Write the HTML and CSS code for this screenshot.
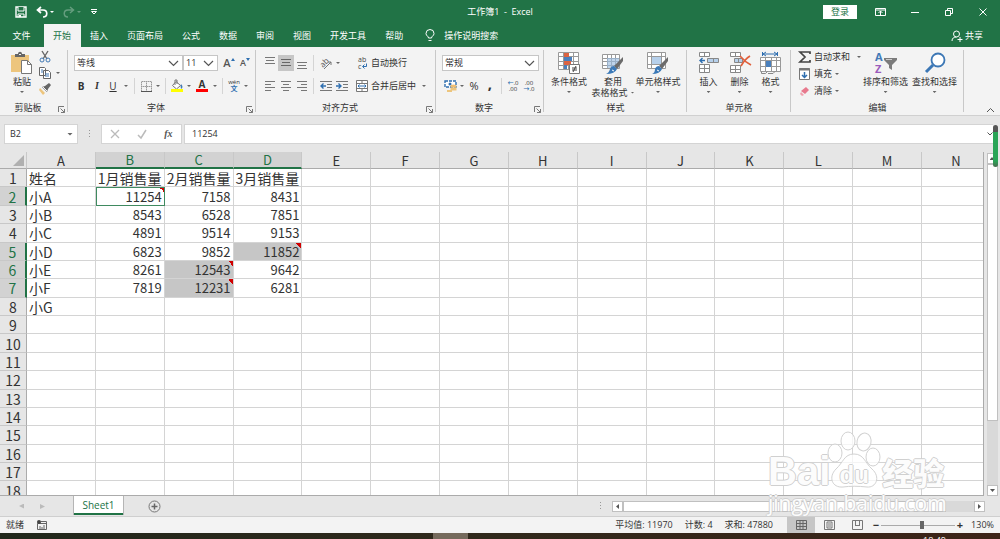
FILE: index.html
```html
<!DOCTYPE html>
<html lang="zh-CN">
<head>
<meta charset="utf-8">
<title>工作簿1 - Excel</title>
<link rel="stylesheet" href="styles.css">
</head>
<body>
<header class="titlebar">
  <div class="quick">
    <button aria-label="保存"><svg width="12" height="12" viewBox="0 0 12 12"><path d="M1 1h10v10H1z" fill="none" stroke="#fff" stroke-width="1.4"/><path d="M3 1v4h6V1" fill="#217346" stroke="#fff"/><path d="M3 11V8h6v3" fill="none" stroke="#fff"/><path d="M4 9h2v2H4z" fill="#fff"/></svg></button>
    <button aria-label="撤消" class="wide"><svg width="12" height="12" viewBox="0 0 12 12"><path d="M5 1L1.500 4l3.500 3M2 4h5c5 0 5 7 0 7" fill="none" stroke="#fff" stroke-width="1.7"/></svg><i class="caret light"></i></button>
    <button aria-label="恢复" class="wide dim"><svg width="12" height="12" viewBox="0 0 12 12"><path d="M7 1l3.500 3L7 7M10 4H5c-5 0-5 7 0 7" fill="none" stroke="#fff" stroke-width="1.5"/></svg><i class="caret light"></i></button>
    <button aria-label="自定义快速访问工具栏"><svg width="8" height="8" viewBox="0 0 8 8"><path d="M1 1.500h6M1.500 3.500h5L4 6z" fill="none" stroke="#fff"/></svg></button>
  </div>
  <h1>工作簿1 &nbsp;-&nbsp; Excel</h1>
  <div class="window">
    <button class="login">登录</button>
    <button aria-label="功能区显示选项"><svg width="11" height="10" viewBox="0 0 11 10"><path d="M.5 1.500h10v7H.5zM.5 3h10M5.500 8V4M3.500 6l2-2 2 2" fill="none" stroke="#fff"/></svg></button>
    <button aria-label="最小化"><svg width="10" height="10" viewBox="0 0 10 10"><path d="M1 5.500h8" stroke="#fff"/></svg></button>
    <button aria-label="还原"><svg width="10" height="10" viewBox="0 0 10 10"><path d="M1.500 3.500h5v5h-5zM3.500 3V1.500h5v5H7" fill="none" stroke="#fff"/></svg></button>
    <button aria-label="关闭"><svg width="10" height="10" viewBox="0 0 10 10"><path d="M1.500 1.500l7 7M8.500 1.500l-7 7" stroke="#fff"/></svg></button>
  </div>
</header>
<nav class="tabs">
  <button class="file">文件</button><button class="active">开始</button><button>插入</button><button>页面布局</button><button>公式</button><button>数据</button><button>审阅</button><button>视图</button><button>开发工具</button><button>帮助</button>
  <button class="tell"><svg width="10" height="13" viewBox="0 0 10 13"><path d="M3.500 9c0-2-2.500-2-2.500-4.500a4 4 0 018 0C9 7 6.500 7 6.500 9zM3.500 11.500h3" fill="none" stroke="#fff"/></svg>操作说明搜索</button>
  <button class="share"><svg width="12" height="12" viewBox="0 0 12 12"><circle cx="5.500" cy="4" r="3" fill="none" stroke="#fff"/><path d="M1 11c0-3 2-4 4.500-4M9 7v5M6.500 9.500h5" fill="none" stroke="#fff"/></svg>共享</button>
</nav>

<section class="ribbon">
  <div class="group clipboard">
    <div class="body">
      <button class="big"><svg width="22" height="22" viewBox="0 0 22 22"><path d="M0 3h18v17H0z" fill="#edc57d"/><path d="M4 5V2h3c0-3 4-3 4 0h3v3z" fill="#666"/><path d="M8 2.500h2" stroke="#f3f3f3"/><path d="M10.500 8.500h6l4 4v9h-10z" fill="#fff" stroke="#777"/><path d="M16.500 8.500v4h4" fill="none" stroke="#777"/></svg><span>粘贴</span><i class="caret"></i></button>
      <div class="stack">
        <button aria-label="剪切"><svg width="12" height="12" viewBox="0 0 12 12"><path d="M3 0l5 8M9 0L4 8" stroke="#666" stroke-width="1.4"/><circle cx="3" cy="9" r="2" fill="none" stroke="#4179b5"/><circle cx="9" cy="9" r="2" fill="none" stroke="#4179b5"/></svg></button>
        <button aria-label="复制"><svg width="12" height="12" viewBox="0 0 12 12"><path d="M.5.500h5l1 1v7h-6zM4.500 3.500h5l2 2v6h-7z" fill="#fff" stroke="#666"/><path d="M2 3h2M2 5h2M6 7h4M6 9h4" stroke="#4179b5"/></svg><i class="caret"></i></button>
        <button aria-label="格式刷"><svg width="12" height="12" viewBox="0 0 12 12"><path d="M1 5l5 5-2 2-4-5z" fill="#edc57d"/><path d="M3 4l5 5 1-3 3-4-2-2-4 3z" fill="#666"/><path d="M4 4l4 4" stroke="#f3f3f3"/></svg></button>
      </div>
    </div>
    <div class="caption">剪贴板<button class="launch" aria-label="剪贴板设置"><svg width="7" height="7" viewBox="0 0 7 7"><path d="M.5 6V.5H6M2.500 2.500l4 4M6.500 3v3.500H3" fill="none" stroke="#777"/></svg></button></div>
  </div>

  <div class="group font">
    <div class="body rows">
      <div class="row">
        <span class="combo family"><select aria-label="字体"><option>等线</option></select><svg width="11" height="7" viewBox="0 0 11 7"><path d="M1 1l4.500 4.500L10 1" fill="none" stroke="#555" stroke-width="1.2"/></svg></span>
        <span class="combo size"><select aria-label="字号"><option>11</option></select><svg width="11" height="7" viewBox="0 0 11 7"><path d="M1 1l4.500 4.500L10 1" fill="none" stroke="#555" stroke-width="1.2"/></svg></span>
        <button class="grow" aria-label="增大字号"><b>A</b><svg width="4" height="3" viewBox="0 0 4 3"><path d="M0 3l2-3 2 3z" fill="#2f6fb0"/></svg></button>
        <button class="grow small" aria-label="减小字号"><b>A</b><svg width="4" height="3" viewBox="0 0 4 3"><path d="M0 0l2 3 2-3z" fill="#2f6fb0"/></svg></button>
      </div>
      <div class="row">
        <button class="ic"><b>B</b></button><button class="ic serif"><em>I</em></button><button class="ic"><u>U</u></button><button class="drop wider" aria-label="下划线选项"><i class="caret"></i></button>
        <i class="sep"></i>
        <button class="ic" aria-label="边框"><svg width="11" height="11" viewBox="0 0 11 11"><path d="M.5.500h10v10H.5zM5.500 0v10M0 5.500h10" fill="none" stroke="#999" stroke-dasharray="1.5 .5"/><path d="M0 10.500h11" stroke="#555"/></svg></button><button class="drop" aria-label="边框选项"><i class="caret"></i></button>
        <i class="sep"></i>
        <button class="ic" aria-label="填充颜色"><svg width="12" height="12" viewBox="0 0 12 12"><path d="M5 1.500l4.500 4L5.500 9 1.500 5.500zM4 5V0h2v4" fill="#fff" stroke="#777"/><path d="M10 4q3 3 0 5-1-3 0-5" fill="#4179b5"/><path d="M0 9h12v3H0z" fill="#ffff00"/></svg></button><button class="drop" aria-label="填充颜色选项"><i class="caret"></i></button>
        <button class="ic fontcolor" aria-label="字体颜色"><b>A</b></button><button class="drop" aria-label="字体颜色选项"><i class="caret"></i></button>
        <i class="sep"></i>
        <button class="ic pinyin"><span>wén</span><span>文</span></button><button class="drop" aria-label="拼音选项"><i class="caret"></i></button>
      </div>
    </div>
    <div class="caption">字体<button class="launch" aria-label="字体设置"><svg width="7" height="7" viewBox="0 0 7 7"><path d="M.5 6V.5H6M2.500 2.500l4 4M6.500 3v3.500H3" fill="none" stroke="#777"/></svg></button></div>
  </div>

  <div class="group align">
    <div class="body">
      <div class="rows">
        <div class="row">
          <button class="ic" aria-label="顶端对齐"><svg width="12" height="12" viewBox="0 0 12 12"><path d="M1 .5h10M2 3.500h8M1 6.500h10" stroke="#777"/></svg></button>
          <button class="ic on" aria-label="垂直居中"><svg width="12" height="12" viewBox="0 0 12 12"><path d="M1 2.500h10M2 5.500h8M1 8.500h10" stroke="#666"/></svg></button>
          <button class="ic" aria-label="底端对齐"><svg width="12" height="12" viewBox="0 0 12 12"><path d="M1 5.500h10M2 8.500h8M1 11.500h10" stroke="#777"/></svg></button>
          <i class="sep"></i>
          <button class="ic" aria-label="方向"><svg width="12" height="12" viewBox="0 0 12 12"><text x="0" y="8" transform="rotate(-45 5 6)" font-size="8" fill="#555">ab</text><path d="M4 12l7-7M11 8V5H8" fill="none" stroke="#777"/></svg></button><button class="drop" aria-label="方向选项"><i class="caret"></i></button>
        </div>
        <div class="row">
          <button class="ic" aria-label="左对齐"><svg width="12" height="12" viewBox="0 0 12 12"><path d="M1 1.500h10M1 4.500h6M1 7.500h10M1 10.500h6" stroke="#777"/></svg></button>
          <button class="ic" aria-label="居中"><svg width="12" height="12" viewBox="0 0 12 12"><path d="M1 1.500h10M3 4.500h6M1 7.500h10M3 10.500h6" stroke="#777"/></svg></button>
          <button class="ic" aria-label="右对齐"><svg width="12" height="12" viewBox="0 0 12 12"><path d="M1 1.500h10M5 4.500h6M1 7.500h10M5 10.500h6" stroke="#777"/></svg></button>
          <i class="sep"></i>
          <button class="ic" aria-label="减少缩进量"><svg width="12" height="12" viewBox="0 0 12 12"><path d="M0 1.500h12M7 4.500h5M7 7.500h5M0 10.500h12" stroke="#777"/><path d="M6 6H1M3.500 3.500L1 6l2.500 2.500" fill="none" stroke="#2f6fb0" stroke-width="1.4"/></svg></button>
          <button class="ic" aria-label="增加缩进量"><svg width="12" height="12" viewBox="0 0 12 12"><path d="M0 1.500h12M7 4.500h5M7 7.500h5M0 10.500h12" stroke="#777"/><path d="M0 6h5M2.500 3.500L5 6 2.500 8.500" fill="none" stroke="#2f6fb0" stroke-width="1.4"/></svg></button>
        </div>
      </div>
      <i class="longsep"></i>
      <div class="rows">
        <div class="row"><button class="text"><svg width="12" height="12" viewBox="0 0 12 12"><text x="2" y="5" font-size="7" fill="#444">ab</text><text x="2" y="12" font-size="7" fill="#444">c</text><path d="M10.500 6.500v3H7M8.500 7.500l-2 2 2 2" fill="none" stroke="#2f6fb0"/></svg>自动换行</button></div>
        <div class="row"><button class="text"><svg width="12" height="12" viewBox="0 0 12 12"><path d="M.5.500h11v11H.5zM.5 3.500h11M.5 8.500h11M6 0v3M6 9v3" fill="#fff" stroke="#777"/><path d="M2 6h8M3.500 4.500L2 6l1.500 1.500M8.500 4.500L10 6 8.500 7.500" fill="none" stroke="#2f6fb0"/></svg>合并后居中</button><button class="drop merge" aria-label="合并选项"><i class="caret"></i></button></div>
      </div>
    </div>
    <div class="caption">对齐方式<button class="launch" aria-label="对齐设置"><svg width="7" height="7" viewBox="0 0 7 7"><path d="M.5 6V.5H6M2.500 2.500l4 4M6.500 3v3.500H3" fill="none" stroke="#777"/></svg></button></div>
  </div>

  <div class="group number">
    <div class="body rows">
      <div class="row"><span class="combo format"><select aria-label="数字格式"><option>常规</option></select><svg width="11" height="7" viewBox="0 0 11 7"><path d="M1 1l4.500 4.500L10 1" fill="none" stroke="#555" stroke-width="1.2"/></svg></span></div>
      <div class="row">
        <button class="ic" aria-label="会计数字格式"><svg width="13" height="12" viewBox="0 0 13 12"><path d="M1 1h11v6H1z" fill="#fff" stroke="#2f6fb0" stroke-width="1.4" stroke-dasharray="3 1"/><circle cx="6" cy="4" r="1.500" fill="#2f6fb0"/><ellipse cx="9.500" cy="6" rx="3" ry="1.500" fill="#edbd72"/><path d="M6.500 7.500h6v3h-6zM3 10h5v2H3z" fill="#edc57d"/></svg></button><button class="drop" aria-label="会计格式选项"><i class="caret"></i></button>
        <button class="ic percent">%</button><button class="ic comma"><b>,</b></button><i class="sep"></i>
        <button class="ic decimals" aria-label="增加小数位数"><span><s>←</s>.0</span><span>.00</span></button>
        <button class="ic decimals" aria-label="减少小数位数"><span>.00</span><span><s>→</s>.0</span></button>
      </div>
    </div>
    <div class="caption">数字<button class="launch" aria-label="数字设置"><svg width="7" height="7" viewBox="0 0 7 7"><path d="M.5 6V.5H6M2.500 2.500l4 4M6.500 3v3.500H3" fill="none" stroke="#777"/></svg></button></div>
  </div>

  <div class="group styles">
    <div class="body">
      <button class="big"><svg width="22" height="22" viewBox="0 0 22 22"><path d="M.5.500h20v17H.5zM5.500 0v18M10.500 0v18M15.500 0v18M0 4.500h20M0 9.500h20M0 13.500h20" fill="#fff" stroke="#999"/><path d="M6 1h5v4H6zM6 9h7v4H6z" fill="#db6443"/><path d="M6 5h8v4H6zM6 13h3v4H6z" fill="#4a80bd"/><path d="M11.500 12.500h10v9h-10z" fill="#fff" stroke="#777"/><path d="M14 16h5M14 18h5M18 14l-3 6" stroke="#444"/></svg><span>条件格式</span><i class="caret"></i></button>
      <button class="big"><svg width="22" height="22" viewBox="0 0 22 22"><path d="M.5 2.500h17v14H.5zM5.500 2v14M9.500 2v14M13.500 2v14M0 6.500h17M0 9.500h17M0 13.500h17" fill="#fff" stroke="#999"/><path d="M5 6h12v10H5z" fill="#9bbde0" opacity=".65"/><path d="M21 5v4l-6 8-3-3z" fill="#6b6b6b"/><path d="M12 14l3 3q-2 5-11 5 3-1 4-5 1-3 4-3" fill="#3c7ab8"/><path d="M10 18l2 1" stroke="#fff"/></svg><span>套用</span><span class="second">表格格式<i class="caret"></i></span></button>
      <button class="big"><svg width="22" height="22" viewBox="0 0 22 22"><path d="M.5.500h18v16H.5zM4.500 0v16M14.500 0v16M0 4.500h18M0 12.500h18" fill="#fff" stroke="#999"/><path d="M5 5h9v7H5z" fill="#b6d0eb"/><path d="M21 5v4l-6 8-3-3z" fill="#6b6b6b"/><path d="M12 14l3 3q-2 5-10 5 3-1 3-5 1-3 4-3" fill="#3c7ab8"/><path d="M10 18l2 1" stroke="#fff"/></svg><span>单元格样式</span><i class="caret"></i></button>
    </div>
    <div class="caption">样式</div>
  </div>

  <div class="group cells">
    <div class="body">
      <button class="big"><svg width="22" height="22" viewBox="0 0 22 22"><path d="M1.500.500h10v4h-10zM6.500 0v4M1.500 12.500h10v8h-10zM6.500 12v8M1 16.500h10" fill="#fff" stroke="#888"/><path d="M9.500 6.500h11v4h-11zM15.500 6v4" fill="#b6d0eb" stroke="#888"/><path d="M7 8.500H2M4.500 6L2 8.500 4.500 11" fill="none" stroke="#2f6fb0" stroke-width="1.4"/></svg><span>插入</span><i class="caret"></i></button>
      <button class="big"><svg width="22" height="22" viewBox="0 0 22 22"><path d="M1.500.500h10v4h-10zM6.500 0v4M1.500 13.500h10v7h-10zM6.500 13v7M1 17.500h10" fill="#fff" stroke="#888"/><path d="M5.500 6.500h8v4h-8zM9.500 6v4" fill="#b6d0eb" stroke="#888"/><path d="M11 4q5 6 11 9M21 4q-5 3-9 10" fill="none" stroke="#e0603c" stroke-width="1.7"/></svg><span>删除</span><i class="caret"></i></button>
      <button class="big"><svg width="22" height="22" viewBox="0 0 22 22"><path d="M2.500 0v4M17.500 0v4M3 2h14M6 0L3 2l3 2M14 0l3 2-3 2" fill="none" stroke="#2f6fb0"/><path d="M.5 5.500h20v14h-20zM5.500 5v14M11.500 5v14M16.500 5v14M0 8.500h20M0 14.500h20" fill="#fff" stroke="#999"/><path d="M6 9h5v6H6z" fill="#4a80bd"/><path d="M1.500 19.500v2h4l2-2M8 21.500h5l2-2" fill="none" stroke="#888"/></svg><span>格式</span><i class="caret"></i></button>
    </div>
    <div class="caption">单元格</div>
  </div>

  <div class="group editing">
    <div class="body">
      <div class="stack">
        <button class="text"><svg width="12" height="12" viewBox="0 0 12 12"><path d="M11 3V1H1l5 5-5 5h10V9" fill="none" stroke="#444" stroke-width="1.7"/></svg>自动求和<i class="caret far"></i></button>
        <button class="text"><svg width="12" height="12" viewBox="0 0 12 12"><path d="M.5.500h10v11H.5z" fill="#fff" stroke="#777"/><path d="M0 1.500h11" stroke="#777" stroke-width="2"/><path d="M5.500 4v5M3 7l2.500 2.500L8 7" fill="none" stroke="#2f6fb0" stroke-width="1.5"/></svg>填充<i class="caret"></i></button>
        <button class="text"><svg width="12" height="12" viewBox="0 0 12 12"><path d="M7 2l3 3-4 4-4-3z" fill="#e8798d"/><path d="M2 7l3 3-2 1-2-2z" fill="#f0a3b0"/></svg>清除<i class="caret"></i></button>
      </div>
      <button class="big"><svg width="22" height="22" viewBox="0 0 22 22"><text x="0" y="9" font-size="11" font-weight="700" fill="#4279b7">A</text><text x="0" y="21" font-size="11" font-weight="700" fill="#9a5bbb">Z</text><path d="M9 6h13v2l-5 5v5l-3-2v-3L9 8z" fill="#7b7b7b"/><path d="M11 7.500h6" stroke="#ccc"/></svg><span>排序和筛选</span><i class="caret"></i></button>
      <button class="big"><svg width="22" height="22" viewBox="0 0 22 22"><circle cx="14" cy="8" r="6.500" fill="#fff" stroke="#3c77b5" stroke-width="1.8"/><path d="M9 13l-7 7" stroke="#3c77b5" stroke-width="3"/></svg><span>查找和选择</span><i class="caret"></i></button>
    </div>
    <div class="caption">编辑</div>
  </div>
  <button class="collapse" aria-label="折叠功能区"><svg width="9" height="6" viewBox="0 0 9 6"><path d="M1 5l3.500-3.500L8 5" fill="none" stroke="#555"/></svg></button>
</section>

<section class="formula">
  <button class="name">B2<i class="caret"></i></button>
  <i class="dots"></i>
  <div class="fx">
    <button aria-label="取消"><svg width="10" height="10" viewBox="0 0 10 10"><path d="M1 1l8 8M9 1L1 9" stroke="#bbb" stroke-width="1.3"/></svg></button>
    <button aria-label="输入"><svg width="10" height="10" viewBox="0 0 10 10"><path d="M1 6l3 3 5-8" fill="none" stroke="#bbb" stroke-width="1.5"/></svg></button>
    <button class="fn"><em>fx</em></button>
  </div>
  <div class="entry"><input aria-label="编辑栏" value="11254"><button aria-label="展开编辑栏"><svg width="6" height="4" viewBox="0 0 6 4"><path d="M.5.500L3 3 5.500.500" fill="none" stroke="#555"/></svg></button></div>
  <span class="indicator"></span>
</section>

<main>
  <div class="sheet"><table><thead></thead><tbody></tbody></table></div>
  <div class="vscroll"><button class="arrow up" aria-label="向上"></button><div class="thumb"></div><button class="arrow down" aria-label="向下"></button></div>
</main>

<footer>
  <div class="sheetbar">
    <button class="nav prev" aria-label="上一张"></button><button class="nav next" aria-label="下一张"></button>
    <button class="sheettab">Sheet1</button>
    <button class="add" aria-label="新工作表"><svg width="13" height="13" viewBox="0 0 13 13"><circle cx="6.500" cy="6.500" r="5.500" fill="none" stroke="#777"/><path d="M3.500 6.500h6M6.500 3.500v6" stroke="#666" stroke-width="1.5"/></svg></button>
    <i class="dots"></i>
    <div class="hscroll"><button class="arrow left" aria-label="向左"></button><div class="thumb"></div><button class="arrow right" aria-label="向右"></button></div>
  </div>
  <div class="status">
    <span>就绪</span>
    <svg width="10" height="10" viewBox="0 0 10 10"><path d="M.5 3.500h9v6h-9zM4 1.500h5.500V4M3 9V6M5 9V7M7 9V5" fill="none" stroke="#666"/><circle cx="2" cy="2" r="2" fill="#444"/></svg>
    <span class="stats"><span>平均值: 11970</span><span>计数: 4</span><span>求和: 47880</span></span>
    <button class="view on" aria-label="普通"><svg width="11" height="10" viewBox="0 0 11 10"><path d="M.5.500h10v9H.5zM4 0v10M7 0v10M0 3.500h11M0 6.500h11" fill="none" stroke="#666"/></svg></button>
    <button class="view" aria-label="页面布局"><svg width="11" height="10" viewBox="0 0 11 10"><path d="M.5.500h10v9H.5zM3 2h5v6H3zM4 4h3M4 6h3" fill="none" stroke="#777"/></svg></button>
    <button class="view" aria-label="分页预览"><svg width="11" height="10" viewBox="0 0 11 10"><path d="M.5.500h10v9H.5zM3.500 0v6M7.500 0v6M3 5.500h5" fill="none" stroke="#777"/></svg></button>
    <button class="zoom" aria-label="缩小">−</button><input type="range" aria-label="缩放" min="10" max="210" value="120"><button class="zoom" aria-label="放大">+</button>
    <span class="pct">130%</span>
  </div>
  <div class="taskbar"><i></i><time>18:49</time></div>
</footer>

<div class="watermark">
  <div class="brand"><span class="bai">Bai</span><span class="paw"><svg width="56" height="58" viewBox="0 0 56 58"><g fill="#fff" fill-opacity=".75" stroke="#d2d2d2"><ellipse cx="9" cy="22" rx="7" ry="9"/><ellipse cx="22" cy="10" rx="7" ry="9"/><ellipse cx="38" cy="11" rx="7" ry="9" transform="rotate(12 38 11)"/><ellipse cx="47" cy="26" rx="7" ry="9"/><path d="M28 23c10 0 11 9 18 15 9 8 4 19-5 18-9-1-17-1-24 0-11 1-15-10-7-18 7-6 8-15 18-15z"/></g></svg><span>du</span></span><span class="jy">经验</span></div>
  <div class="url">jingyan.baidu.com</div>
</div>
<script src="sheet.js"></script>
</body>
</html>
```

FILE: styles.css
```css
* { box-sizing: border-box; }
body {
  margin: 0; height: 100vh; display: flex; flex-direction: column; overflow: hidden;
  background: #e6e6e6; color: #333;
  font: 9px/12px "Open Sans", "Noto Sans CJK SC", sans-serif;
}
button, select, input { font: inherit; color: inherit; border: 0; padding: 0; margin: 0; background: none; border-radius: 0; }
button { display: flex; align-items: center; justify-content: center; flex: none; white-space: nowrap; }
svg { flex: none; display: block; overflow: visible; }
i { font-style: normal; }

.caret { flex: none; width: 4px; height: 2px; background: #666; clip-path: polygon(0 0, 100% 0, 50% 100%); }
.caret.light { background: #fff; }

.titlebar { height: 24px; flex: none; display: grid; grid-template-columns: 1fr auto 1fr; align-items: center; background: #217346; color: #fff; }
.titlebar h1 { margin: 0; font: inherit; }
.quick { display: flex; gap: 9px; padding-left: 15px; }
.quick .wide { gap: 2px; }
.quick .dim { opacity: .3; }
.window { display: flex; justify-content: flex-end; align-items: center; padding-right: 12px; gap: 24px; }
.window .login { width: 34px; height: 14px; margin-right: -6px; background: #fff; color: #217346; }

.tabs { height: 23px; flex: none; display: flex; background: #217346; color: #fff; }
.tabs button { padding: 0 10px 0 9px; }
.tabs .file { width: 44px; }
.tabs .active { background: #f3f3f3; color: #217346; }
.tabs .tell { gap: 9px; margin-left: 3px; }
.tabs .share { gap: 2px; margin-left: auto; padding-right: 17px; }

.ribbon { height: 69px; flex: none; display: flex; background: #f3f3f3; border-bottom: 1px solid #d0d0d0; }
.group { flex: none; display: flex; flex-direction: column; position: relative; }
.group::after { content: ""; position: absolute; right: 0; top: 3px; bottom: 3px; width: 1px; background: #c8c8c8; }
.clipboard { width: 68px; }
.font { width: 188px; }
.align { width: 180px; }
.number { width: 108px; }
.styles { width: 143px; }
.cells { width: 104px; }
.editing { width: 173px; }
.body { flex: 1; display: flex; padding: 4px 5px 0; }
.caption { height: 15px; display: flex; justify-content: center; align-items: center; line-height: 14px; position: relative; }
.caption:has(.launch) { padding-right: 12px; }
.launch { position: absolute; right: 3px; bottom: 2px; }
.rows { flex-direction: column; display: flex; gap: 7px; }
.group > .rows { padding-top: 8px; }
.align .body > .rows { padding-top: 4px; }
.row { display: flex; align-items: center; height: 16px; }
.ic { width: 16px; height: 16px; font-size: 10px; }
.ic.on { background: #c6c6c6; }
.drop { width: 8px; height: 16px; }
.drop.wider { width: 10px; }
.drop.merge { width: 16px; }
.sep { flex: none; width: 1px; height: 16px; margin: 0 3px; background: #d4d4d4; }
.align .sep { margin: 0 4px 0 3px; }
.longsep { width: 1px; height: 43px; margin: 2px 5px 0 1px; background: #d4d4d4; }
.text { gap: 3px; }
.big { flex-direction: column; justify-content: flex-start; padding-top: 1px; }
.big span { height: 11px; line-height: 11px; }
.big svg { margin-bottom: 2px; }
.big > .caret { margin-top: 4px; }
.big .second { display: flex; align-items: center; gap: 3px; }
.stack { display: flex; flex-direction: column; }

.clipboard .body { padding-left: 11px; gap: 6px; }
.clipboard .stack { gap: 4px; align-items: flex-start; }
.clipboard .stack button { gap: 5px; }
.number .body, .align .body { padding-left: 6px; }
.styles .body { padding-left: 3px; }
.styles .big { width: 44px; }
.styles .big:last-child { width: 46px; }
.cells .body { padding-left: 6px; }
.cells .big { width: 31px; }
.editing .body { padding-left: 8px; }
.editing .stack { width: 62px; gap: 5px; align-items: flex-start; }
.editing .big { width: 49px; }
.text .far { margin-left: 4px; }

.combo { position: relative; height: 16px; flex: none; background: #fff; border: 1px solid #c6c6c6; }
.combo select { width: 100%; height: 14px; padding-left: 2px; appearance: none; display: block; }
.combo svg { position: absolute; right: 3px; top: 4px; pointer-events: none; }
.font .row:first-child { padding-left: 1px; }
.family { width: 109px; }
.size { width: 35px; margin-right: 3px; }
.number .format { width: 97px; }
.grow { width: 16px; height: 16px; font-size: 11px; }
.grow b { font-weight: 600; color: #555; }
.grow svg { margin-bottom: 8px; }
.grow.small { font-size: 9px; }
.serif { font-family: "Liberation Serif", serif; font-weight: 700; }
.fontcolor { width: 18px; }
.fontcolor b { width: 12px; height: 12px; line-height: 9px; border-bottom: 3px solid #f00; }
.pinyin, .decimals { flex-direction: column; }
.pinyin span { font-size: 6px; line-height: 5px; }
.pinyin span + span { color: #2f6fb0; font-size: 7px; line-height: 8px; font-weight: 700; }
.percent { font-size: 11px; }
.comma { font-size: 15px; padding-bottom: 7px; }
.decimals span { font-size: 6px; line-height: 6px; }
.decimals s { text-decoration: none; color: #2f6fb0; font-weight: 700; }
.collapse { margin: auto 5px 1px auto; height: 9px; }

.formula { height: 36px; flex: none; display: flex; align-items: center; padding: 0 7px 0 4px; position: relative; }
.formula .name { width: 74px; height: 20px; justify-content: space-between; padding: 0 4px 0 5px; background: #fff; border: 1px solid #d4d4d4; }
.name .caret { width: 6px; height: 3px; }
.dots { width: 1px; height: 9px; margin: 0 11px; background: repeating-linear-gradient(#999 0 1px, transparent 1px 3px); }
.fx { display: flex; align-items: center; justify-content: space-around; width: 81px; height: 20px; margin-right: 2px; background: #fff; border: 1px solid #d4d4d4; }
.fn { font: 700 10px/12px "Liberation Serif", serif; color: #555; }
.entry { flex: 1; display: flex; height: 20px; background: #fff; border: 1px solid #d4d4d4; border-right: 0; }
.entry input { flex: 1; min-width: 0; padding: 0 7px; }
.indicator { position: absolute; right: 2px; top: 9px; width: 5px; height: 42px; border-radius: 3px; background: linear-gradient(#555 0 7px, #2aa557 7px 36px, #4a6b50); z-index: 2; }

main { flex: 1; min-height: 0; display: grid; grid-template-columns: minmax(0, 1fr) 16px; }
.sheet { overflow: hidden; border-right: 1px solid #ababab; border-bottom: 1px solid #ababab; background: #fff; min-height: 0; }
table { table-layout: fixed; width: calc(100% + 8px); height: calc(100% + 5px); border-collapse: separate; border-spacing: 0; font-family: "Noto Sans CJK SC", sans-serif; font-size: 14px; color: #333; }
th, td { padding: 1px 0 0; overflow: hidden; white-space: nowrap; line-height: 16px; border: solid #d4d4d4; border-width: 0 1px 1px 0; }
th { font-weight: 400; font-size: 14px; background: #e6e6e6; }
thead th { height: 17px; line-height: 14px; font-size: 13px; border-bottom-color: #ababab; border-right-color: #c8c8c8; }
thead th.hl { background: #d2d2d2; color: #217346; border-bottom: 2px solid #217346; }
tbody th { border-right-color: #ababab; border-bottom-color: #c8c8c8; }
tbody th.hl { background: #d2d2d2; color: #217346; border-right: 2px solid #217346; }
.corner { width: 27px; }
.corner i { display: block; width: 11px; height: 11px; margin-left: 13px; background: #b0b0b0; clip-path: polygon(100% 0, 100% 100%, 0 100%); }
td { padding-left: 2px; }
td.num { text-align: right; padding-right: 2px; font-size: 13px; }
td.note { background: #fff linear-gradient(to top right, transparent 50%, #d00000 50%) right top / 5px 5px no-repeat; }
td.note.sel { background-color: #c6c6c6; }
td.current { outline: 1px solid #3f8a60; outline-offset: -1px; }

.arrow { width: 11px; height: 11px; background: #fff; border: 1px solid #c0c0c0; }
.arrow::before { content: ""; width: 5px; height: 3px; background: #555; clip-path: polygon(50% 0, 100% 100%, 0 100%); }
.down::before { transform: rotate(180deg); }
.left::before { transform: rotate(-90deg); }
.right::before { transform: rotate(90deg); }
.vscroll { display: flex; flex-direction: column; align-items: center; padding: 1px 2px 0; }
.vscroll .thumb { width: 11px; flex: 4; background: #fff; border: 1px solid #c0c0c0; }
.vscroll::after { content: ""; flex: 1; order: 1; background: #d9d9d9; width: 11px; }
.vscroll .down { order: 2; }

.sheetbar { height: 21px; display: flex; align-items: center; border-bottom: 1px solid #cfcfcf; padding-right: 15px; }
.nav { width: 5px; height: 5px; background: #bbb; clip-path: polygon(0 50%, 100% 0, 100% 100%); margin-left: 19px; }
.nav.next { transform: rotate(180deg); margin-left: 16px; }
.sheettab { width: 51px; height: 19px; margin: 0 24px 2px 28px; font-size: 10px; background: #fff; color: #217346; border: solid #b5b5b5; border-width: 0 1px; box-shadow: inset 0 -2px #217346; }
.sheetbar .dots { margin-left: auto; }
.hscroll { width: 373px; display: flex; }
.hscroll .thumb { flex: 10; background: #fff; border: 1px solid #c0c0c0; }
.hscroll::after { content: ""; order: 1; flex: 1; max-width: 28px; background: #d9d9d9; }
.hscroll .right { order: 2; }
.status { height: 16px; display: flex; align-items: center; padding: 0 6px; background: #f3f3f3; }
.status > svg { margin-left: 13px; }
.stats { margin: 0 14px 0 auto; display: flex; gap: 12px; }
.view { width: 28px; height: 16px; }
.view.on { background: #c6c6c6; }
.zoom { width: 10px; font-size: 11px; font-weight: 700; }
.status input { width: 74px; height: 16px; appearance: none; background: linear-gradient(#aaa, #aaa) center / 100% 1px no-repeat; }
.status input::-webkit-slider-thumb { appearance: none; width: 4px; height: 8px; background: #666; }
.pct { width: 29px; text-align: right; }
.taskbar { height: 6px; display: flex; position: relative; overflow: hidden; background: linear-gradient(90deg, #20271b, #30281b 50%, #3d2418); }
.taskbar i { width: 35px; margin-left: 433px; background: #756a5c; }
.taskbar time { margin: 2px 54px 0 auto; color: #fff; font-size: 9px; line-height: 12px; }

.watermark { position: absolute; right: 55px; bottom: 22px; width: 177px; pointer-events: none; }
.watermark span, .url { text-shadow: 1px 0 #d0d0d0, -1px 0 #d0d0d0, 0 1px #d0d0d0, 0 -1px #d0d0d0; color: #fcfcfc; }
.brand { display: flex; align-items: flex-end; height: 58px; font-family: "Liberation Sans", sans-serif; font-weight: 700; }
.bai { font-size: 40px; line-height: 36px; }
.paw { display: grid; flex: none; margin-left: -4px; }
.paw > * { grid-area: 1 / 1; }
.paw > span { align-self: end; justify-self: center; font-size: 24px; line-height: 28px; }
.jy { font: 900 31px/34px "Noto Sans CJK SC", sans-serif; white-space: nowrap; }
.url { font: 21px/28px "Open Sans", sans-serif; }
```

FILE: sheet.js
```js
const columns = 'ABCDEFGHIJKLMN'.split('');
const data = [
  ['姓名', '1月销售量', '2月销售量', '3月销售量'],
  ['小A', 11254, 7158, 8431],
  ['小B', 8543, 6528, 7851],
  ['小C', 4891, 9514, 9153],
  ['小D', 6823, 9852, 11852],
  ['小E', 8261, 12543, 9642],
  ['小F', 7819, 12231, 6281],
  ['小G']
];
const selected = ['B2', 'D5', 'C6', 'C7'];

const head = document.querySelector('thead').insertRow();
head.innerHTML = '<th class="corner"><i></i></th>' + columns.map(c =>
  `<th scope="col" class="${'BCD'.includes(c) ? 'hl' : ''}">${c}</th>`).join('');

const body = document.querySelector('tbody');
for (let r = 1; r <= 18; r++) {
  const row = body.insertRow();
  row.innerHTML = `<th scope="row" class="${[2, 5, 6, 7].includes(r) ? 'hl' : ''}">${r}</th>`;
  columns.forEach((c, i) => {
    const value = (data[r - 1] || [])[i];
    const cell = row.insertCell();
    if (value !== undefined) cell.textContent = value;
    if (typeof value === 'number') cell.classList.add('num');
    if (selected.includes(c + r)) cell.classList.add('note', c + r === 'B2' ? 'current' : 'sel');
  });
}
```
